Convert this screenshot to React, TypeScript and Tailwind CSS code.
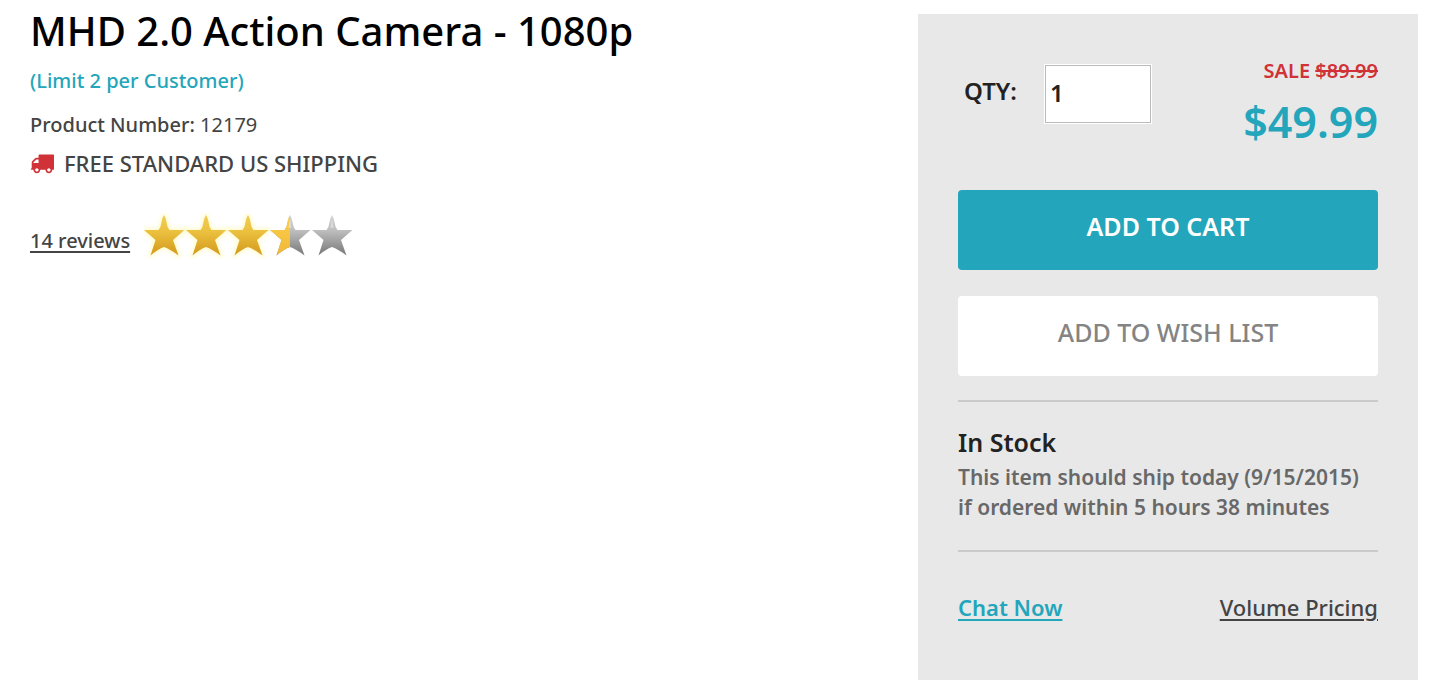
import { useState } from "react";

const STAR = "M20 2 Q21.500 4 22.500 9 Q23 14 25.500 17 L40.500 17 L29 27 L34.500 42.500 Q26 36 20 34 Q14 36 6.500 42.500 L11.500 27 L0 17 L14.500 17 Q17 14 17.500 9 Q18.500 4 20 2 Z";

function Star({ index, fill }: { index: number; fill: "full" | "half" | "none" }) {
  const x = index * 42;
  return (
    <g transform={`translate(${x} 0)`}>
      {fill === "full" && <path d={STAR} fill="#fffac8" stroke="#fffac8" strokeWidth="3" filter="url(#glow)" />}
      <path d={STAR} fill={fill === "full" ? "url(#gold)" : "url(#silver)"} />
      {fill === "half" && <path d={STAR} fill="url(#goldHalf)" clipPath="url(#left)" />}
      {fill !== "full" && <path d="M20 6 L18.500 15 L21.500 15 Z" fill="#ffffff" opacity="0.4" />}
    </g>
  );
}

function Rating() {
  return (
    <svg width="212" height="46" viewBox="0 0 212 46" role="img" aria-label="3.5 out of 5 stars">
      <defs>
        <linearGradient id="gold" x1="0" y1="0" x2="0" y2="1">
          <stop offset="0" stopColor="#f0cc55" />
          <stop offset="0.4" stopColor="#ecc140" />
          <stop offset="1" stopColor="#d3981b" />
        </linearGradient>
        <linearGradient id="goldHalf" x1="0" y1="0" x2="0" y2="1">
          <stop offset="0" stopColor="#fbd04c" />
          <stop offset="1" stopColor="#f0b837" />
        </linearGradient>
        <linearGradient id="silver" x1="0" y1="0" x2="0" y2="1">
          <stop offset="0" stopColor="#d6d6d6" />
          <stop offset="0.4" stopColor="#bcbcbc" />
          <stop offset="1" stopColor="#777777" />
        </linearGradient>
        <clipPath id="left">
          <rect x="0" y="0" width="20" height="46" />
        </clipPath>
        <filter id="glow" x="-20%" y="-20%" width="140%" height="140%">
          <feGaussianBlur stdDeviation="2" />
        </filter>
      </defs>
      <Star index={0} fill="full" />
      <Star index={1} fill="full" />
      <Star index={2} fill="full" />
      <Star index={3} fill="half" />
      <Star index={4} fill="none" />
    </svg>
  );
}

function Truck() {
  return (
    <svg width="24" height="24" viewBox="0 0 1792 1792" fill="#d03237" aria-hidden="true">
      <path d="M640 1408q0-52-38-90t-90-38-90 38-38 90 38 90 90 38 90-38 38-90zm-384-512h384v-256h-158q-13 0-22 9l-195 195q-9 9-9 22v30zm1280 512q0-52-38-90t-90-38-90 38-38 90 38 90 90 38 90-38 38-90zm256-1088v1024q0 15-4 26.500t-13.500 18.500-16.500 11.500-23.500 6-22.500 2-25.500 0-22.500-.5q0 106-75 181t-181 75-181-75-75-181h-384q0 106-75 181t-181 75-181-75-75-181h-64q-3 0-22.500.5t-25.500 0-22.500-2-23.500-6-16.500-11.500-13.500-18.500-4-26.500q0-26 19-45t45-19v-320q0-8-.5-35t0-38 2.500-34.500 6.500-37 14-30.500 22.500-30l198-198q19-19 50.500-32t58.500-13h160v-192q0-26 19-45t45-19h1024q26 0 45 19t19 45z" />
    </svg>
  );
}

export default function App() {
  const [qty, setQty] = useState("1");
  return (
    <main className="flex items-start bg-white pr-3 pl-[30px] font-['Noto_Sans',sans-serif] font-medium text-[#444444]">
      <section className="min-w-0 flex-1 pt-[3px]">
        <h1 className="text-[40px] leading-[56px] font-medium text-black">MHD 2.0 Action Camera - 1080p</h1>
        <p className="mt-[6px] text-[20px] leading-8 text-[#23a6bb]">(Limit 2 per Customer)</p>
        <p className="mt-3 text-[20px] leading-8">Product Number: <span className="font-normal">12179</span></p>
        <p className="mt-[6px] flex items-center gap-[10px] text-[22px] leading-8">
          <Truck />
          FREE STANDARD US SHIPPING
        </p>
        <div className="mt-[34px] flex items-start gap-[14px]">
          <a href="#reviews" className="mt-3 text-[20px] leading-8 underline decoration-2 underline-offset-3">14 reviews</a>
          <Rating />
        </div>
      </section>

      <aside className="mt-[14px] w-[500px] shrink-0 bg-[#e8e8e8] px-10 pb-14">
        <div className="flex h-44 items-start justify-between pt-10">
          <div className="flex items-center gap-7 pt-[11px] pl-[6px]">
            <label htmlFor="qty" className="pb-[6px] text-[24px] leading-8 font-semibold text-[#222222]">QTY:</label>
            <input
              id="qty"
              value={qty}
              onChange={(e) => setQty(e.target.value)}
              className="h-[58px] w-[106px] border border-[#bbbbbb] bg-white px-1 pb-1 text-[24px] font-semibold text-[#222222] outline outline-white"
            />
          </div>
          <div className="text-right">
            <p className="text-[20px] leading-[34px] font-semibold text-[#d03237]">SALE <s className="decoration-2">$89.99</s></p>
            <p className="mt-1 text-[43px] leading-[60px] font-semibold text-[#23a6bb]">$49.99</p>
          </div>
        </div>
        <button type="button" className="block h-20 w-full rounded bg-[#23a6bb] pb-2 text-[25px] leading-8 font-semibold text-white">
          ADD TO CART
        </button>
        <button type="button" className="mt-[26px] block h-20 w-full rounded bg-white pb-2 text-[25px] leading-8 text-[#848484]">
          ADD TO WISH LIST
        </button>
        <div className="mt-6 border-y-2 border-[#cacaca] pt-6 pb-7">
          <h2 className="text-[25px] leading-8 font-semibold text-[#222222]">In Stock</h2>
          <p className="mt-1 text-[21px] leading-[30px] font-semibold text-[#686868]">
            This item should ship today (9/15/2015)
            <br />
            if ordered within 5 hours 38 minutes
          </p>
        </div>
        <div className="mt-10 flex justify-between text-[22px] leading-[30px]">
          <a href="#chat" className="pb-[2px] font-semibold text-[#23a6bb] underline decoration-2 underline-offset-3">Chat Now</a>
          <a href="#volume" className="pb-[2px] underline decoration-2 underline-offset-3">Volume Pricing</a>
        </div>
      </aside>
    </main>
  );
}
